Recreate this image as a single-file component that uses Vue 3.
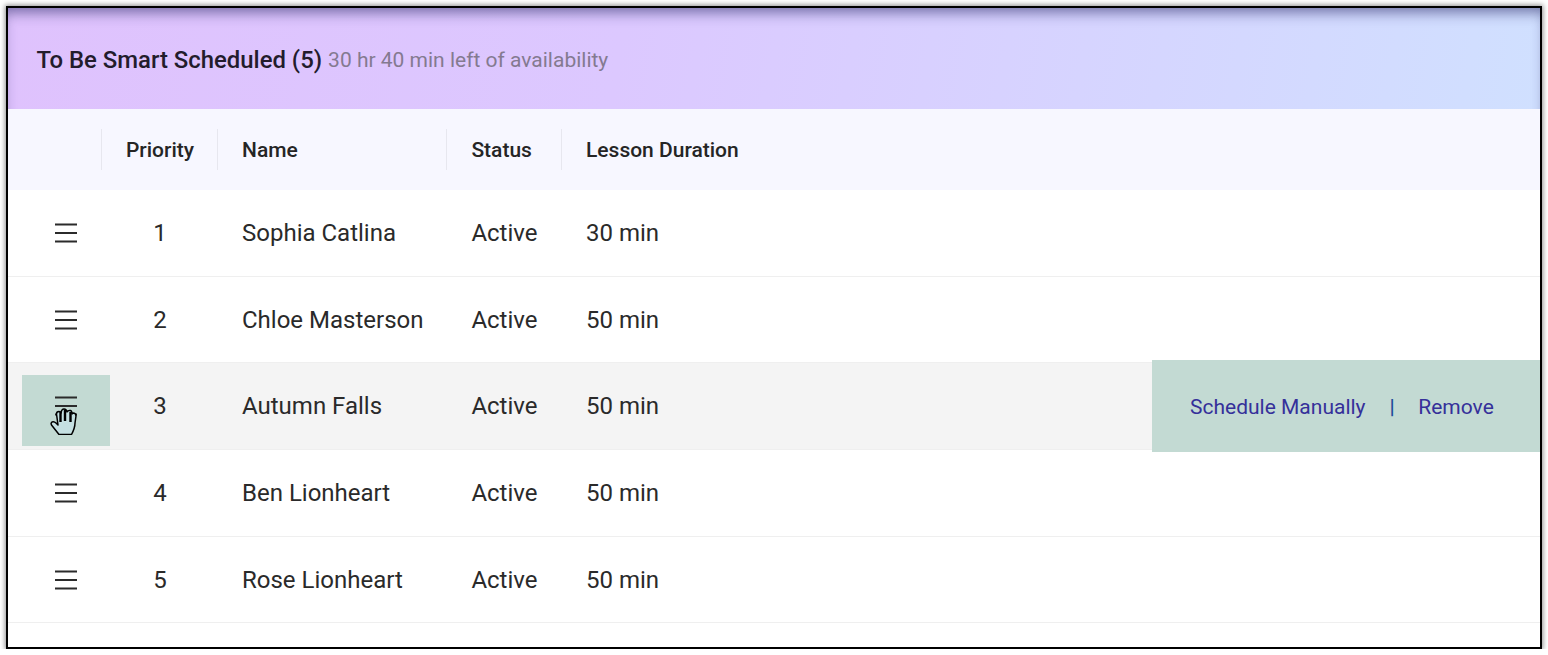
<template>
  <div class="frame">
    <div class="banner">
      <span class="title">To Be Smart Scheduled ({{ students.length }})</span>
      <span class="left">30 hr 40 min left of availability</span>
    </div>

    <div class="row head">
      <div class="th"></div>
      <div class="th center">Priority</div>
      <div class="th">Name</div>
      <div class="th">Status</div>
      <div class="th last">Lesson Duration</div>
    </div>

    <div v-for="(s, i) in students" :key="s.name" class="row body" :class="{ hover: i === 2 }">
      <div class="handle-cell">
        <div class="handle">
          <svg class="bars" width="24" height="20" viewBox="0 0 24 20">
            <path d="M1 1.500h22M1 10h22M1 18.500h22" stroke="#2b2b2b" stroke-width="2" fill="none" />
          </svg>
          <svg v-if="i === 2" class="hand" width="27" height="27" viewBox="0 0 27 27">
            <path d="M9 26.500 L1.500 17 Q0.500 15 2 14 Q4 13 6 15 L8 17 L6.500 6 Q6.500 3.500 9 3.500 Q10.500 3.500 11 5 Q11.500 1 14 1 Q16.500 1 17 4 Q18 2 20.500 2.500 Q22 3 22 6 L23 5 Q26 5 26 8 L25 15 Q25 20 21.500 26.500 Z" fill="#c5e0e2" stroke="#000" stroke-width="1.500" stroke-linejoin="round" />
            <path d="M10.500 4v10M15 2v11M20.500 4v10" stroke="#000" stroke-width="2.400" fill="none" />
          </svg>
        </div>
      </div>
      <div class="td center">{{ i + 1 }}</div>
      <div class="td">{{ s.name }}</div>
      <div class="td">{{ s.status }}</div>
      <div class="td">{{ s.duration }}</div>
      <div v-if="i === 2" class="actions">
        <a>Schedule Manually</a>
        <span class="sep">|</span>
        <a>Remove</a>
      </div>
    </div>
  </div>
</template>

<script setup>
const students = [
  { name: 'Sophia Catlina', status: 'Active', duration: '30 min' },
  { name: 'Chloe Masterson', status: 'Active', duration: '50 min' },
  { name: 'Autumn Falls', status: 'Active', duration: '50 min' },
  { name: 'Ben Lionheart', status: 'Active', duration: '50 min' },
  { name: 'Rose Lionheart', status: 'Active', duration: '50 min' }
]
</script>

<style>
html, body { background: #fff; }
</style>

<style scoped>
.frame {
  box-sizing: border-box;
  width: 1536px;
  height: 643px;
  margin: 6px 0 0 6px;
  border: 2px solid #000;
  background: #fff;
  box-shadow: 0 0 5px 1px rgba(0, 0, 0, .45);
  font-family: Roboto, "Liberation Sans", sans-serif;
  color: #2a2a2a;
  overflow: hidden;
}

.banner {
  height: 101px;
  box-sizing: border-box;
  padding: 3px 29px 0 28.500px;
  display: flex;
  align-items: center;
  gap: 6px;
  background: linear-gradient(100deg, #dfc2fd 0%, #dcc8ff 40%, #d0e0ff 100%);
  box-shadow: inset 0 10px 14px -6px rgba(50, 50, 110, .65);
}
.title { font-size: 23.900px; font-weight: 500; color: #231c2c; }
.left { font-size: 21px; color: #847a90; }

.row {
  display: grid;
  grid-template-columns: 94px 116px 229.400px 114.600px 1fr;
  position: relative;
}

.head { height: 81px; background: #f7f7ff; align-items: center; }
.th {
  height: 41px;
  line-height: 43px;
  padding-left: 24px;
  border-right: 1px solid #e7e7ef;
  font-size: 21px;
  font-weight: 500;
  color: #252525;
}
.th.last { border-right: 0; }
.th.center { padding-left: 1px; text-align: center; }

.body {
  height: 86.700px;
  box-sizing: border-box;
  border-bottom: 1px solid #efefef;
  align-items: center;
  font-size: 24px;
}
.body.hover { background: #f4f4f4; }
.td { padding-left: 24px; }
.td.center { padding-left: 0; text-align: center; }

.handle-cell { padding-left: 14px; }
.handle {
  width: 88px;
  height: 71px;
  display: flex;
  align-items: center;
  justify-content: center;
  position: relative;
}
.hover .handle::before {
  content: "";
  position: absolute;
  left: 0;
  right: 0;
  top: 4px;
  height: 71px;
  background: #c3dad3;
}
.bars { display: block; position: relative; }
.hand { position: absolute; left: 28px; top: 37px; }

.actions {
  position: absolute;
  right: 0;
  top: -3px;
  bottom: -3px;
  width: 388px;
  box-sizing: border-box;
  padding: 2px 0 0 38px;
  display: flex;
  align-items: center;
  background: #c3dad3;
  color: #35309a;
  font-size: 21px;
}
.sep { margin: 0 23.500px 0 24px; color: #1e4a9a; font-weight: 500; }
</style>
